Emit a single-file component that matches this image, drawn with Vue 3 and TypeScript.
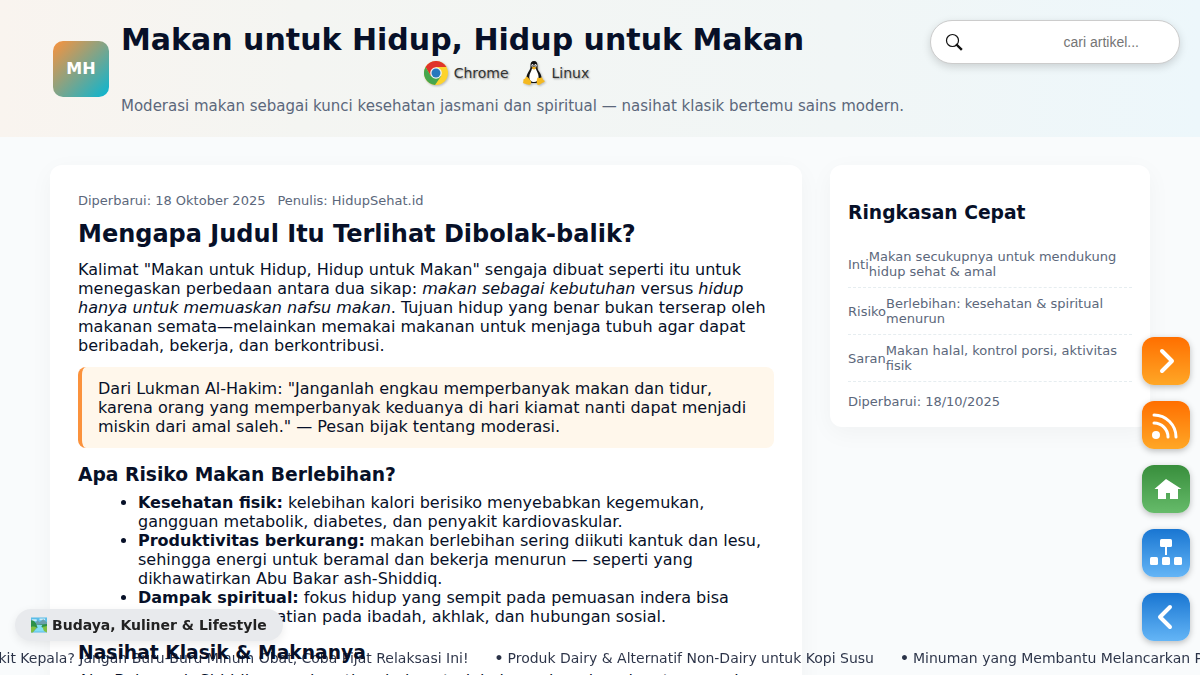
<script setup lang="ts">
interface SummaryRow {
  label: string
  value: string
}

const summary: SummaryRow[] = [
  { label: 'Inti', value: 'Makan secukupnya untuk mendukung hidup sehat & amal' },
  { label: 'Risiko', value: 'Berlebihan: kesehatan & spiritual menurun' },
  { label: 'Saran', value: 'Makan halal, kontrol porsi, aktivitas fisik' },
]

const headlines: string[] = [
  'Sakit Kepala? Jangan Buru-Buru Minum Obat, Coba Pijat Relaksasi Ini!',
  'Produk Dairy & Alternatif Non-Dairy untuk Kopi Susu',
  'Minuman yang Membantu Melancarkan Pencernaan',
]
</script>

<template>
  <div class="page">
    <header class="site-header">
      <div class="brand">
        <div class="logo">MH</div>
        <div class="brand-text">
          <h1>Makan untuk Hidup, Hidup untuk Makan</h1>
          <div class="agents">
            <span class="agent">
              <svg width="24" height="24" viewBox="0 0 24 24" aria-hidden="true">
                <circle cx="12" cy="12" r="12" fill="#fdd32c" />
                <path d="M1.600 6A12 12 0 0 1 22.400 6H12L6.800 15z" fill="#e0342b" />
                <path d="M6.800 15 1.600 6A12 12 0 0 0 11 24l6.200-9z" fill="#46a64d" />
                <circle cx="12" cy="12" r="5.800" fill="#f4f4f4" />
                <circle cx="12" cy="12" r="4.500" fill="#2878bd" />
              </svg>
              Chrome
            </span>
            <span class="agent">
              <svg width="24" height="24" viewBox="0 0 24 24" aria-hidden="true">
                <path d="M12 0C9.500 0 8.300 1.800 8.500 4.500c.2 3-.5 3.800-2 6.300C5 13.400 4 16 4.300 18.500L8 22h8l3.500-3.500c.5-3-1-6-2.700-8.200-1.400-1.900-1.300-3-1.300-5.300C15.500 1.800 14.500 0 12 0z" fill="#111" />
                <path d="M10 7.500c-.5 2.500-2.700 5-2.700 8.500 0 3 2 5 4.700 5s4.600-2 4.600-5c0-3.500-2-6-2.800-8.500z" fill="#fff" />
                <ellipse cx="10.500" cy="4.600" rx="1.100" ry="1.500" fill="#fff" />
                <ellipse cx="13.500" cy="4.600" rx="1.200" ry="1.500" fill="#fff" />
                <circle cx="10.700" cy="4.900" r=".6" fill="#111" />
                <circle cx="13.200" cy="4.900" r=".6" fill="#111" />
                <path d="M9.500 6.700 12 5.500l2.700 1.200L12 8.800z" fill="#efad18" />
                <path d="M4.500 15.500c1.300 0 2.700 2.300 4.200 4.300 1.200 1.700.3 4-1.900 4-1.700 0-3-.9-4.800-1.200-1.700-.4-.5-1.900-.6-3.400-.1-1.500 1.200-1 1.900-1.900.4-.7.3-1.800 1.200-1.800zM15.800 16.500c1 .6 2.600.6 3.700-.2 1 0 .9 1.400 1.500 2.100.7.900 2.100 1.100 1.700 2-.9 1.200-3.200 1.500-4.400 2.900-1.500 1.300-3.700.4-3.600-1.800.1-1.700.1-4.500 1.100-5z" fill="#f4b921" />
              </svg>
              Linux
            </span>
          </div>
          <p class="tagline">Moderasi makan sebagai kunci kesehatan jasmani dan spiritual — nasihat klasik bertemu sains modern.</p>
        </div>
      </div>
      <form class="search" role="search" @submit.prevent>
        <button type="submit" aria-label="Cari">
          <svg width="18" height="18" viewBox="0 0 18 18" fill="none" stroke="#111" aria-hidden="true">
            <circle cx="7.500" cy="7.500" r="6" stroke-width="1.200" />
            <path d="m12 12 4 4" stroke-width="2.400" stroke-linecap="square" />
          </svg>
        </button>
        <input type="text" aria-label="Cari artikel" placeholder="cari artikel..." />
      </form>
    </header>

    <main class="layout">
      <article class="card article">
        <div class="meta"><span>Diperbarui: 18 Oktober 2025</span><span>Penulis: HidupSehat.id</span></div>
        <h2>Mengapa Judul Itu Terlihat Dibolak-balik?</h2>
        <p>
          Kalimat "Makan untuk Hidup, Hidup untuk Makan" sengaja dibuat seperti itu untuk menegaskan perbedaan antara
          dua sikap: <em>makan sebagai kebutuhan</em> versus <em>hidup hanya untuk memuaskan nafsu makan</em>. Tujuan
          hidup yang benar bukan terserap oleh makanan semata—melainkan memakai makanan untuk menjaga tubuh agar dapat
          beribadah, bekerja, dan berkontribusi.
        </p>
        <blockquote>
          Dari Lukman Al-Hakim: "Janganlah engkau memperbanyak makan dan tidur, karena orang yang memperbanyak
          keduanya di hari kiamat nanti dapat menjadi miskin dari amal saleh." — Pesan bijak tentang moderasi.
        </blockquote>
        <h3>Apa Risiko Makan Berlebihan?</h3>
        <ul>
          <li><strong>Kesehatan fisik:</strong> kelebihan kalori berisiko menyebabkan kegemukan, gangguan metabolik, diabetes, dan penyakit kardiovaskular.</li>
          <li><strong>Produktivitas berkurang:</strong> makan berlebihan sering diikuti kantuk dan lesu, sehingga energi untuk beramal dan bekerja menurun — seperti yang dikhawatirkan Abu Bakar ash-Shiddiq.</li>
          <li><strong>Dampak spiritual:</strong> fokus hidup yang sempit pada pemuasan indera bisa mengurangi perhatian pada ibadah, akhlak, dan hubungan sosial.</li>
        </ul>
        <h3>Nasihat Klasik &amp; Maknanya</h3>
        <p>Abu Bakar ash-Shiddiq mengingatkan bahwa terlalu banyak makan dapat merusak badan dan melemahkan semangat.</p>
      </article>

      <aside class="card summary">
        <h3>Ringkasan Cepat</h3>
        <dl>
          <div v-for="row in summary" :key="row.label" class="row">
            <dt>{{ row.label }}</dt>
            <dd>{{ row.value }}</dd>
          </div>
        </dl>
        <p>Diperbarui: 18/10/2025</p>
      </aside>
    </main>

    <div class="ticker">
      <div class="track">
        <a v-for="item in headlines" :key="item" href="#"><span class="dot">•</span>{{ item }}</a>
      </div>
    </div>

    <a class="category" href="#">
      <svg width="16" height="16" viewBox="0 0 17 16" aria-hidden="true">
        <path d="M0 0h17v16H0z" fill="#5bbde8" />
        <path d="M1 2h5v2H1zM9 1h6v2H9z" fill="#c9ecf8" />
        <path d="m3 8 4-5 2 2 4-3 4 3v6H3z" fill="#6a9fae" />
        <path d="M0 3c3 0 5 2 6 5l11-1v4H0z" fill="#2c9149" />
        <path d="M6 8h6l-1 2 5 2v3H3l4-4z" fill="#83def3" />
        <path d="M0 10c3-1 5 0 6 1l-4 5H0zM12 10l5-1v7c-3-1-4-2-4-4z" fill="#80bf43" />
      </svg>
      Budaya, Kuliner &amp; Lifestyle
    </a>

    <nav class="dock" aria-label="Navigasi cepat">
      <a class="orange" href="#" aria-label="Berikutnya">
        <svg viewBox="0 0 48 48"><path d="m20 14 10 10-10 10" fill="none" stroke="#fff" stroke-width="4" stroke-linecap="round" stroke-linejoin="round" /></svg>
      </a>
      <a class="orange" href="#" aria-label="RSS">
        <svg viewBox="0 0 48 48">
          <circle cx="14" cy="34" r="4" fill="#fff" />
          <path d="M12 22a14 14 0 0 1 14 14M12 14a22 22 0 0 1 22 22" fill="none" stroke="#fff" stroke-width="3" stroke-linecap="round" />
        </svg>
      </a>
      <a class="green" href="#" aria-label="Beranda">
        <svg viewBox="0 0 48 48"><path d="M24 14 12.500 24H16v10h8v-6h4v6h8V24h3.500z" fill="#fff" /></svg>
      </a>
      <a class="blue" href="#" aria-label="Peta situs">
        <svg viewBox="0 0 48 48" fill="#fff">
          <rect x="18" y="10" width="12" height="8" rx="1.500" />
          <path d="M23 18h2v8h-2z" />
          <rect x="8" y="28" width="8" height="8" rx="1.500" />
          <rect x="20" y="28" width="8" height="8" rx="1.500" />
          <rect x="32" y="28" width="8" height="8" rx="1.500" />
        </svg>
      </a>
      <a class="blue" href="#" aria-label="Sebelumnya">
        <svg viewBox="0 0 48 48"><path d="m28 14-10 10 10 10" fill="none" stroke="#fff" stroke-width="4" stroke-linecap="round" stroke-linejoin="round" /></svg>
      </a>
    </nav>
  </div>
</template>

<style>
html {
  scrollbar-width: none;
}
body {
  margin: 0;
  background: #f9fbfc;
}
</style>

<style scoped>
.page {
  font: 16px/19px "DejaVu Sans", sans-serif;
  color: #071028;
}
h1, h2, h3, p, ul, dl, dd, blockquote {
  margin: 0;
}
.site-header {
  display: flex;
  justify-content: space-between;
  align-items: flex-start;
  padding: 20px 20px 20px 53px;
  background: linear-gradient(90deg, #f9f4ef, #f4f5f2 25%, #f1f6f6 70%, #edf7fb);
}
.brand {
  display: flex;
  align-items: center;
  gap: 12px;
}
.logo {
  display: grid;
  place-items: center;
  width: 56px;
  height: 56px;
  border-radius: 10px;
  background: linear-gradient(135deg, #fb923c, #06b6d4);
  color: #fff;
  font-weight: 700;
}
h1 {
  font-size: 30px;
  line-height: 40px;
}
.agents {
  display: flex;
  justify-content: center;
  gap: 13px;
  height: 26px;
  padding-right: 12px;
}
.agent {
  display: flex;
  align-items: center;
  gap: 6px;
  font-size: 14px;
  color: #333;
  text-shadow: 1px 1px 2px rgba(0, 0, 0, 0.4);
}
.agent svg {
  filter: drop-shadow(1px 1px 1px rgba(0, 0, 0, 0.25));
}
.tagline {
  margin-top: 10px;
  font-size: 15px;
  line-height: 21px;
  color: #5b677b;
}
.search {
  display: flex;
  align-items: center;
  box-sizing: border-box;
  width: 250px;
  height: 44px;
  padding: 0 15px 0 14px;
  border: 1px solid #ccc;
  border-radius: 22px;
  background: #fff;
  box-shadow: 0 3px 8px rgba(0, 0, 0, 0.15);
}
.search button {
  display: flex;
  padding: 0;
  border: 0;
  background: none;
}
.search input {
  flex: 1;
  min-width: 0;
  padding: 0 25px 0 0;
  border: 0;
  outline: 0;
  background: none;
  font: 14px "Liberation Sans", sans-serif;
  text-align: right;
}
.search input::placeholder {
  color: #757575;
}
.layout {
  display: grid;
  grid-template-columns: minmax(0, 1fr) 320px;
  align-items: start;
  gap: 28px;
  max-width: 1100px;
  margin: 28px auto;
}
.card {
  border-radius: 12px;
  background: #fff;
  box-shadow: 0 6px 24px rgba(2, 6, 23, 0.04);
}
.article {
  padding: 28px;
}
.meta {
  display: flex;
  gap: 12px;
  font-size: 13px;
  line-height: 15px;
  color: #5b677b;
}
h2 {
  margin: 12px 0;
  font-size: 24px;
  line-height: 28px;
}
h3 {
  line-height: 24px;
}
blockquote {
  margin: 12px 0 15px;
  padding: 12px 16px;
  border-left: 4px solid #fb923c;
  border-radius: 8px;
  background: #fff7eb;
}
ul {
  margin: 6px 0 15px;
  padding-left: 60px;
}
.article p {
  margin-top: 6px;
}
.article h2 {
  margin-bottom: 12px;
}
.summary {
  padding: 36px 18px 18px;
}
.summary h3 {
  margin-bottom: 16px;
}
.summary dl,
.summary p {
  font-size: 13px;
  line-height: 15px;
  color: #5b677b;
}
.row {
  display: flex;
  align-items: center;
  padding: 8px 0;
  border-bottom: 1px dashed #e6edf0;
}
.summary p {
  margin-top: 12px;
}
.ticker {
  position: fixed;
  inset: auto 0 8px;
  overflow: hidden;
  font-size: 14px;
  line-height: 18px;
}
.track {
  display: flex;
  gap: 26px;
  width: max-content;
  transform: translateX(-32px);
}
.track a {
  color: #071028;
  opacity: 0.85;
  text-decoration: none;
  white-space: nowrap;
}
.dot {
  margin-right: 4px;
  font-weight: 700;
}
.category {
  position: fixed;
  bottom: 34px;
  left: 15px;
  display: flex;
  align-items: center;
  gap: 5px;
  padding: 0 16px;
  border-radius: 16px;
  background: #e8eaed;
  box-shadow: 0 3px 10px rgba(0, 0, 0, 0.08);
  color: #222;
  font-size: 14px;
  font-weight: 700;
  line-height: 32px;
  text-decoration: none;
}
.dock {
  position: fixed;
  right: 10px;
  bottom: 34px;
  display: grid;
  gap: 16px;
}
.dock a {
  width: 48px;
  height: 48px;
  border-radius: 12px;
  box-shadow: 0 2px 6px rgba(0, 0, 0, 0.25);
}
.dock svg {
  display: block;
}
.orange {
  background: linear-gradient(#ff6f00, #ffa726);
}
.green {
  background: linear-gradient(#388e3c, #66bb6a);
}
.blue {
  background: linear-gradient(#1976d2, #64b5f6);
}
</style>
